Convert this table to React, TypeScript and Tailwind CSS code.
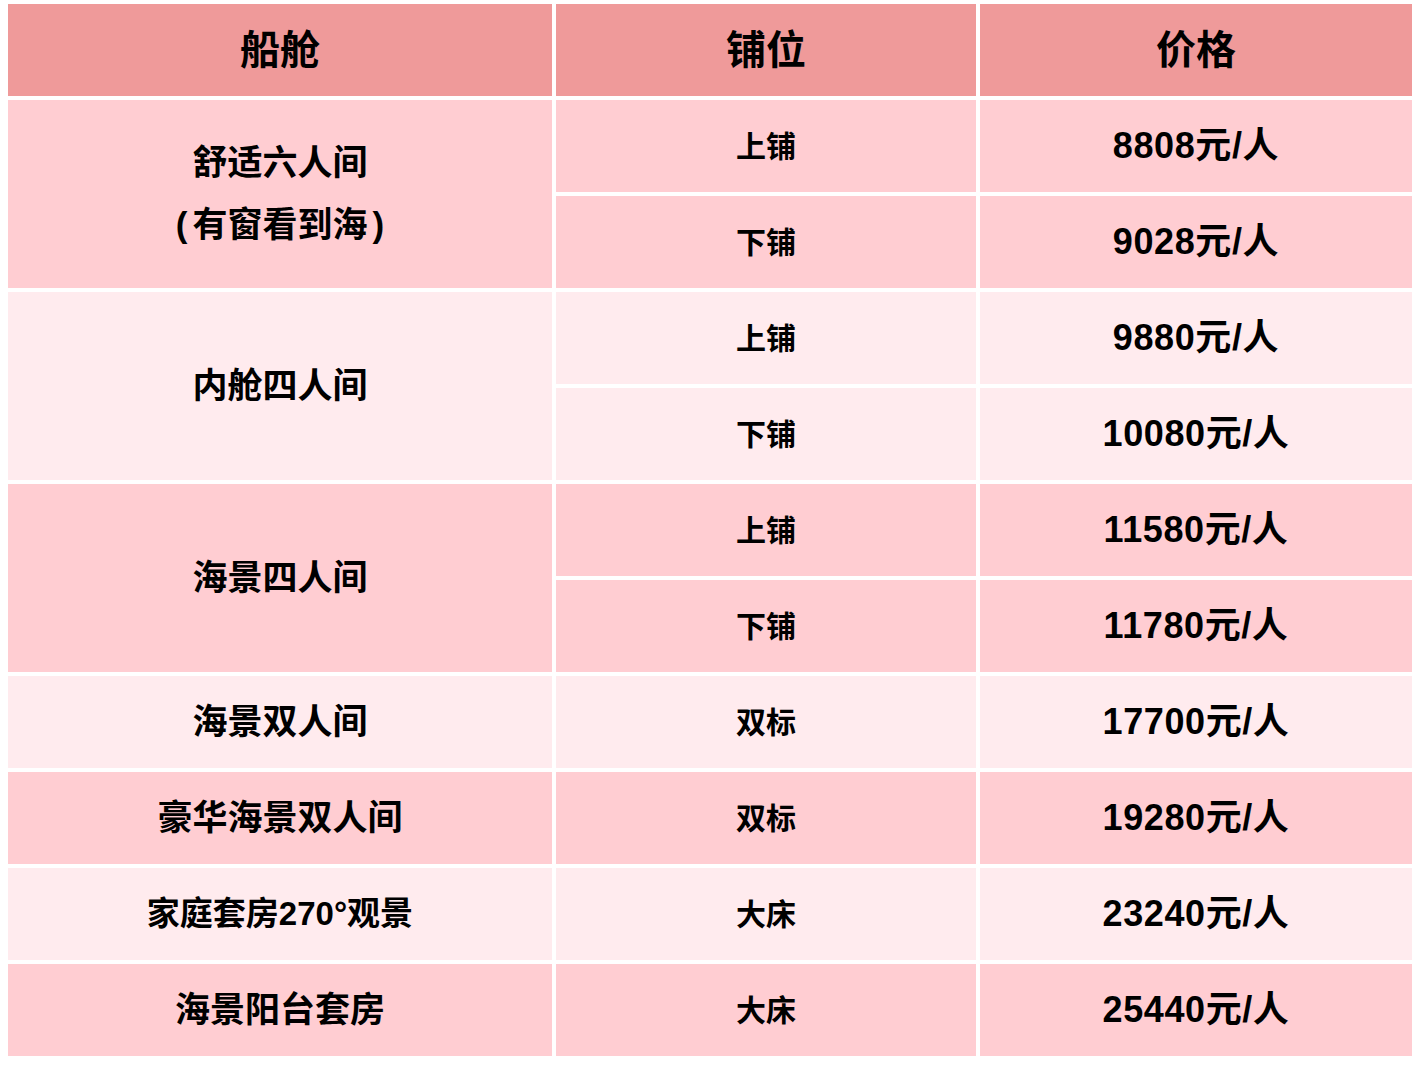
import React from "react";

type Row = { berth: string; price: string };
type Group = { name: React.ReactNode; small?: boolean; tone: "dark" | "light"; rows: Row[] };

const groups: Group[] = [
  {
    name: (
      <div className="leading-[62px]">
        <div>舒适六人间</div>
        <div>
          <span className="mr-[5px]">(</span>有窗看到海<span className="ml-[5px]">)</span>
        </div>
      </div>
    ),
    tone: "dark",
    rows: [
      { berth: "上铺", price: "8808" },
      { berth: "下铺", price: "9028" },
    ],
  },
  {
    name: "内舱四人间",
    tone: "light",
    rows: [
      { berth: "上铺", price: "9880" },
      { berth: "下铺", price: "10080" },
    ],
  },
  {
    name: "海景四人间",
    tone: "dark",
    rows: [
      { berth: "上铺", price: "11580" },
      { berth: "下铺", price: "11780" },
    ],
  },
  { name: "海景双人间", tone: "light", rows: [{ berth: "双标", price: "17700" }] },
  { name: "豪华海景双人间", tone: "dark", rows: [{ berth: "双标", price: "19280" }] },
  { name: "家庭套房270°观景", small: true, tone: "light", rows: [{ berth: "大床", price: "23240" }] },
  { name: "海景阳台套房", tone: "dark", rows: [{ berth: "大床", price: "25440" }] },
];

export default function App() {
  const font = { fontFamily: '"Liberation Sans", "Noto Sans CJK SC", Arial, sans-serif' };
  return (
    <div className="min-h-[1075px] bg-white pl-2 pt-1 text-black" style={font}>
      <div className="grid grid-cols-[544px_420px_432px] grid-rows-[repeat(11,92px)] gap-1 font-bold">
        <div className="flex items-center justify-center bg-[#ef9a9a] text-[40px]">船舱</div>
        <div className="flex items-center justify-center bg-[#ef9a9a] text-[40px]">铺位</div>
        <div className="flex items-center justify-center bg-[#ef9a9a] text-[40px]">价格</div>
        {groups.map((g, gi) => {
          const bg = g.tone === "dark" ? "bg-[#ffcdd2]" : "bg-[#ffebee]";
          return (
            <React.Fragment key={gi}>
              <div
                className={`col-start-1 flex items-center justify-center text-center ${bg} ${
                  g.small ? "text-[33px]" : "text-[35px]"
                } ${g.rows.length === 2 ? "row-span-2" : "row-span-1"}`}
              >
                {g.name}
              </div>
              {g.rows.map((r, ri) => (
                <React.Fragment key={ri}>
                  <div className={`col-start-2 flex items-center justify-center text-[30px] ${bg}`}>{r.berth}</div>
                  <div className={`col-start-3 flex items-center justify-center text-[36px] tracking-[0.6px] ${bg}`}>
                    {r.price}元/人
                  </div>
                </React.Fragment>
              ))}
            </React.Fragment>
          );
        })}
      </div>
    </div>
  );
}
